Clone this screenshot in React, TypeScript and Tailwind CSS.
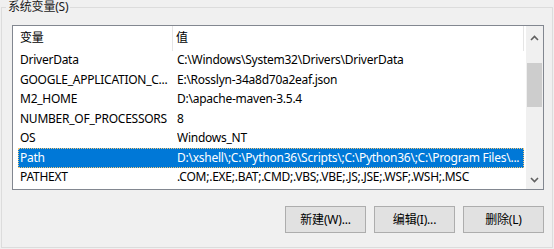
import React from 'react';

const rows = [
  { name: 'DriverData', value: 'C:\\Windows\\System32\\Drivers\\DriverData' },
  { name: 'GOOGLE_APPLICATION_C...', value: 'E:\\Rosslyn-34a8d70a2eaf.json' },
  { name: 'M2_HOME', value: 'D:\\apache-maven-3.5.4' },
  { name: 'NUMBER_OF_PROCESSORS', value: '8' },
  { name: 'OS', value: 'Windows_NT' },
  { name: 'Path', value: 'D:\\xshell\\;C:\\Python36\\Scripts\\;C:\\Python36\\;C:\\Program Files\\...', selected: true },
  { name: 'PATHEXT', value: '.COM;.EXE;.BAT;.CMD;.VBS;.VBE;.JS;.JSE;.WSF;.WSH;.MSC' },
];

function Chevron({ up }: { up?: boolean }) {
  return (
    <svg width="9" height="6" viewBox="0 0 9 6" className="block">
      <path
        d={up ? 'M1 5 L4.5 1.5 L8 5' : 'M1 1 L4.5 4.5 L8 1'}
        fill="none"
        stroke="#606060"
        strokeWidth="1.6"
      />
    </svg>
  );
}

export default function App() {
  return (
    <div className="w-[554px] h-[249px] bg-[#f0f0f0] overflow-hidden text-[12px] text-black font-['Noto_Sans','Noto_Sans_CJK_SC',sans-serif]">
      <fieldset className="ml-[1px] w-[552px] h-[248px] border border-[#dcdcdc] flex flex-col">
        <legend className="ml-[4px] px-[2px] leading-[14px] text-[#1a1a1a] tracking-[-0.2px]">系统变量(S)</legend>

        <div className="ml-[10px] mt-[11px] w-[532px] h-[165px] border border-[#828790] bg-white flex">
          <div className="flex-1 flex flex-col tracking-[-0.25px]">
            <div className="h-[24.5px] flex items-center w-[511px]">
              <div className="w-[160px] h-full pl-[7px] flex items-center border-r border-[#e5e5e5]">变量</div>
              <div className="flex-1 h-full pl-[3px] flex items-center border-r border-[#e5e5e5]">值</div>
            </div>
            {rows.map((r) => (
              <div
                key={r.name}
                className={
                  'ml-[5px] w-[506px] h-[19.5px] flex items-center whitespace-nowrap overflow-hidden ' +
                  (r.selected ? 'bg-[#0078d7] text-white outline outline-1 outline-dotted outline-[#f5c97a] -outline-offset-1' : '')
                }
              >
                <div className="w-[159px] pl-[2px] shrink-0">{r.name}</div>
                <div className="flex-1 min-w-0 overflow-hidden">{r.value}</div>
              </div>
            ))}
          </div>
          <div className="w-[17px] bg-[#f0f0f0] flex flex-col items-center">
            <div className="h-[17px] mt-[3px] flex items-center justify-center">
              <Chevron up />
            </div>
            <div className="mt-[17px] w-[15px] h-[44px] bg-[#cdcdcd]" />
            <div className="flex-1" />
            <div className="h-[17px] mb-[1px] flex items-center justify-center">
              <Chevron />
            </div>
          </div>
        </div>

        <div className="mt-[16px] mr-[8px] flex justify-end gap-[8px]">
          {['新建(W)...', '编辑(I)...', '删除(L)'].map((b) => (
            <button
              key={b}
              className="w-[81px] h-[27px] bg-[#e1e1e1] border border-[#adadad] text-[12px] text-black tracking-[-0.2px]"
            >
              {b}
            </button>
          ))}
        </div>
      </fieldset>
    </div>
  );
}
